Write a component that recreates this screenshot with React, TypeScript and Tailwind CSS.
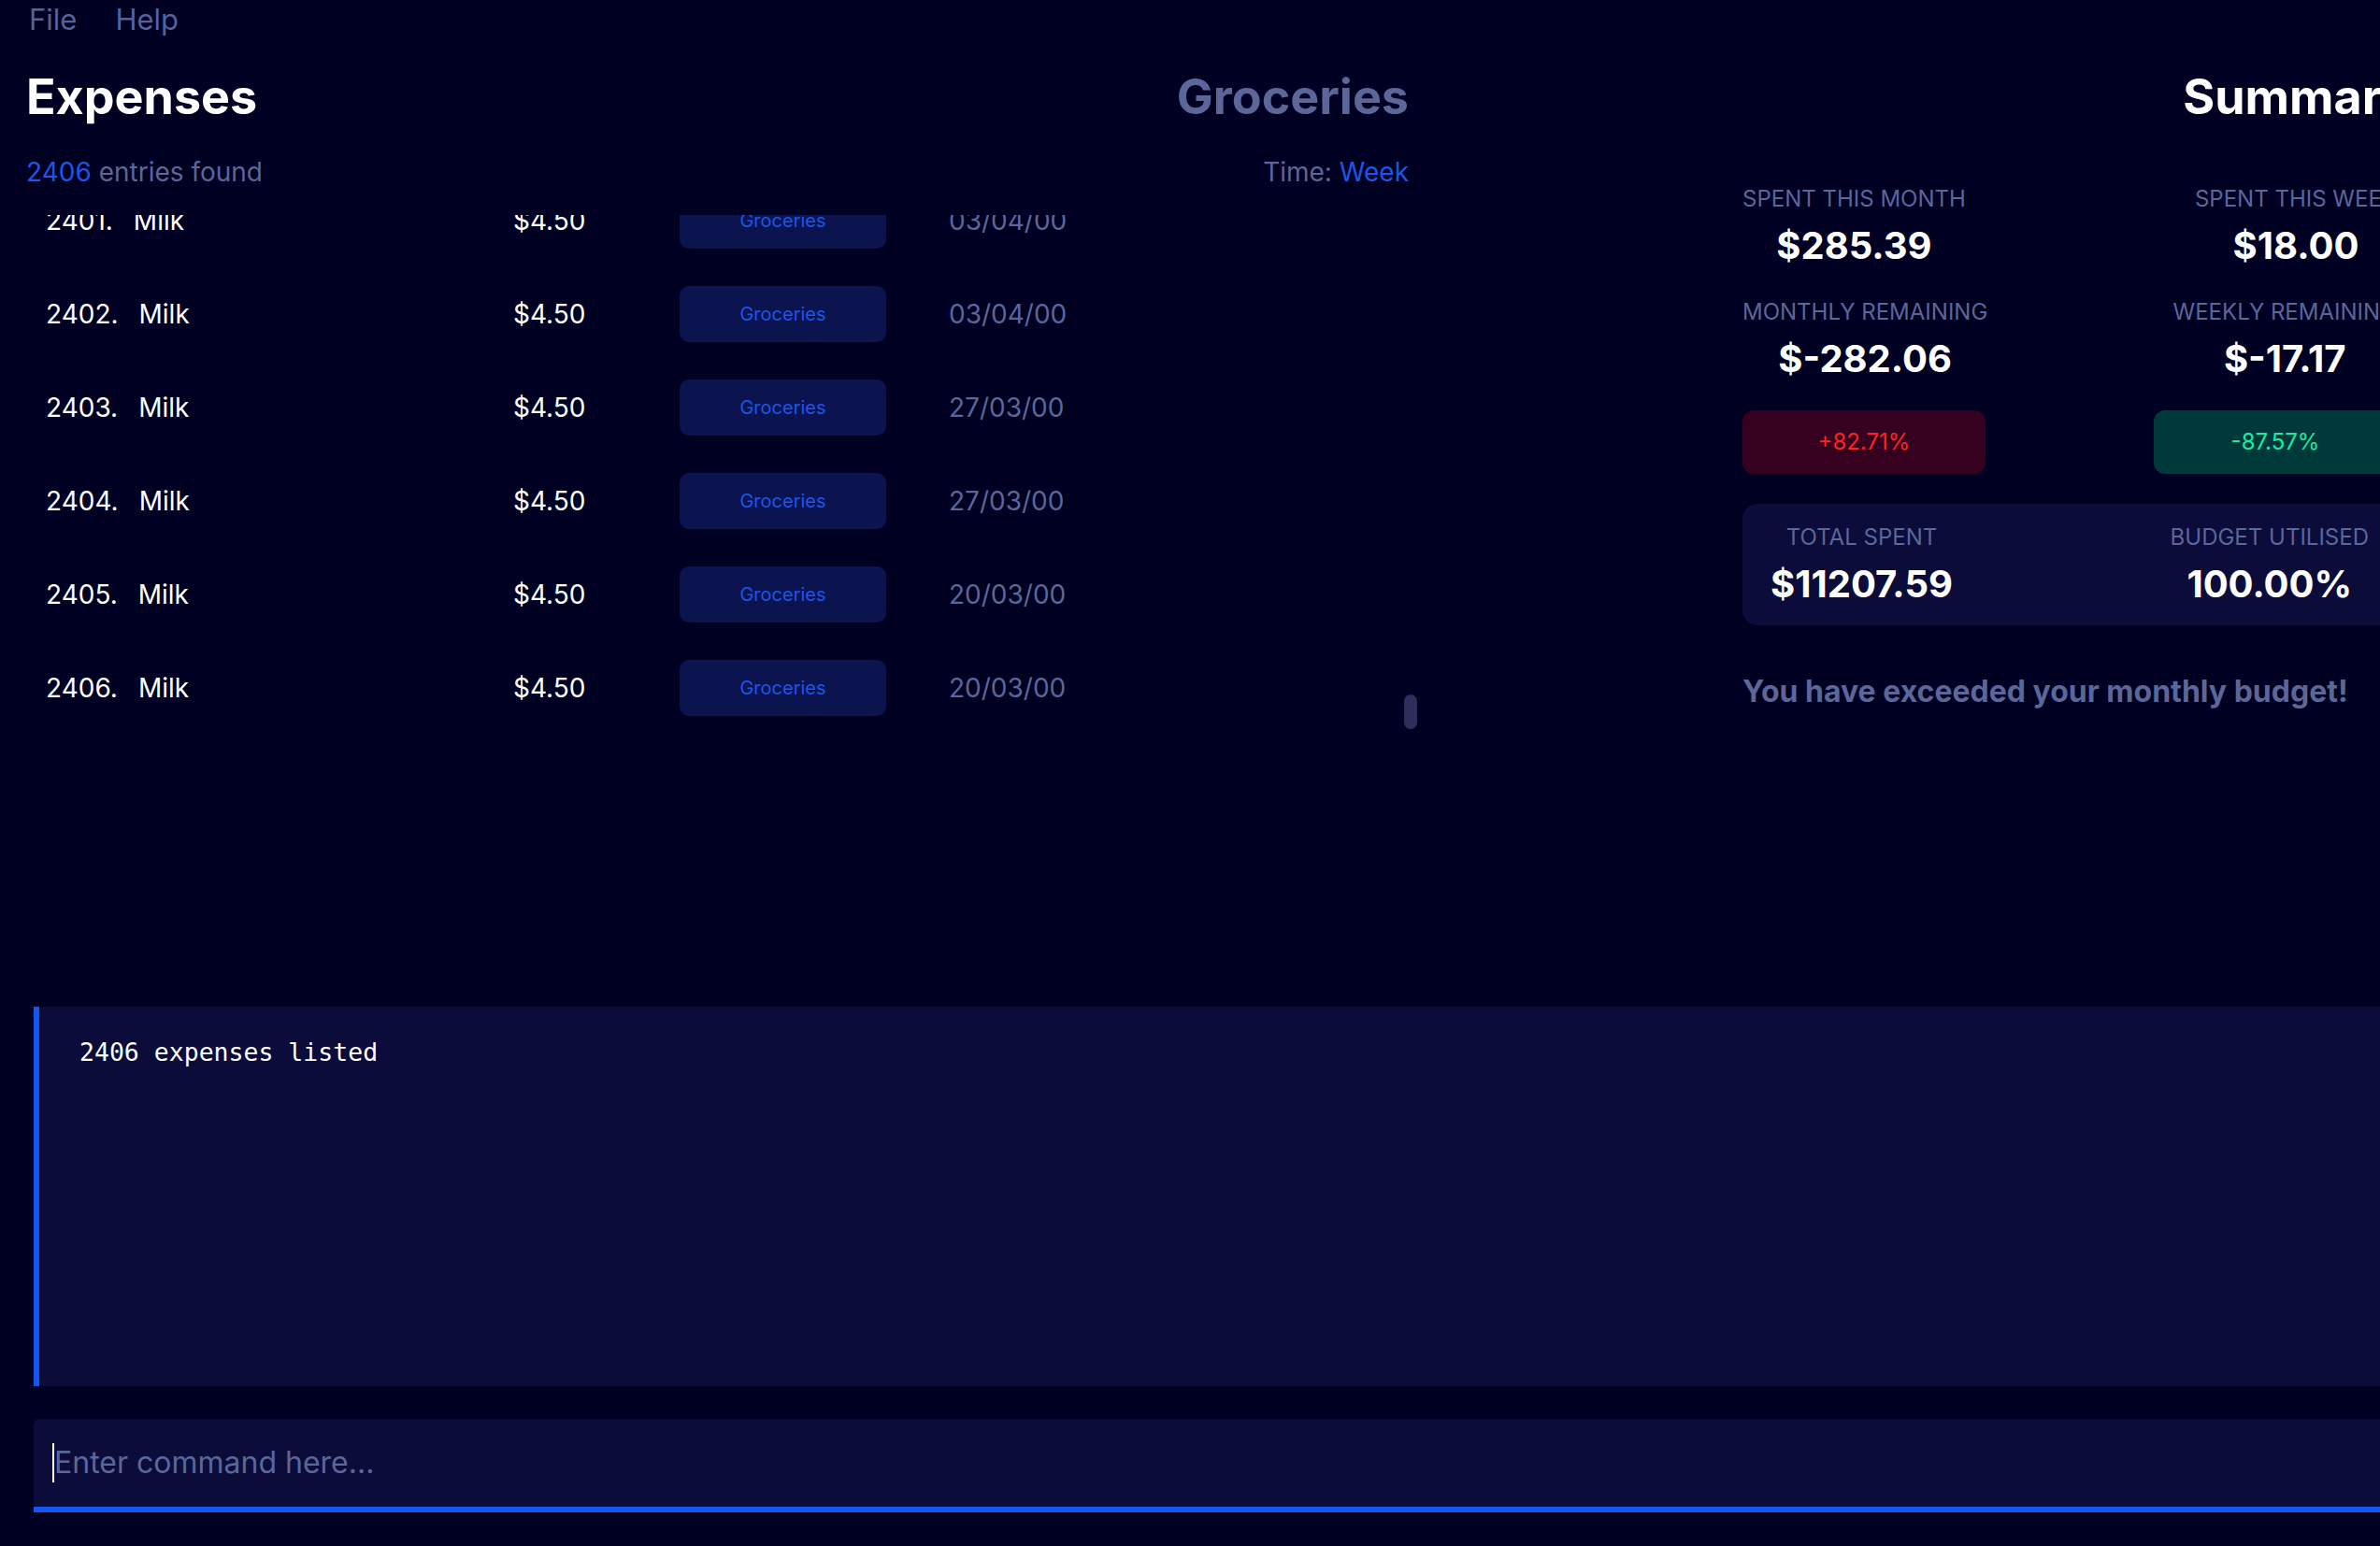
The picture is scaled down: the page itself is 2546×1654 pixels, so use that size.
import React from 'react';

interface Expense {
    index: number;
    name: string;
    amount: string;
    category: string;
    date: string;
}

const expenses: Expense[] = [
    { index: 2401, name: 'Milk', amount: '$4.50', category: 'Groceries', date: '03/04/00' },
    { index: 2402, name: 'Milk', amount: '$4.50', category: 'Groceries', date: '03/04/00' },
    { index: 2403, name: 'Milk', amount: '$4.50', category: 'Groceries', date: '27/03/00' },
    { index: 2404, name: 'Milk', amount: '$4.50', category: 'Groceries', date: '27/03/00' },
    { index: 2405, name: 'Milk', amount: '$4.50', category: 'Groceries', date: '20/03/00' },
    { index: 2406, name: 'Milk', amount: '$4.50', category: 'Groceries', date: '20/03/00' },
];

const ExpenseRow: React.FC<{ expense: Expense }> = ({ expense }) => (
    <div className="h-[100px] flex items-center pl-[21px] text-[28px] leading-[34px]">
        <div className="w-[500px] flex gap-[22px] text-white">
            <span>{expense.index}.</span>
            <span>{expense.name}</span>
        </div>
        <div className="w-[178px] text-white">{expense.amount}</div>
        <div className="w-[221px] h-[60px] rounded-[10px] bg-[#0c1450] flex items-center justify-center text-[20px] text-[#1b55ea]">
            {expense.category}
        </div>
        <div className="ml-[67px] text-[#5b6699]">{expense.date}</div>
    </div>
);

const Stat: React.FC<{ label: string; value: string }> = ({ label, value }) => (
    <div className="flex flex-col items-center">
        <span className="text-[24px] leading-[30px] text-[#5b6699]">{label}</span>
        <span className="mt-[11px] text-[40px] leading-[48px] font-bold text-white">{value}</span>
    </div>
);

export default function App() {
    return (
        <div className="w-screen h-screen overflow-hidden bg-[#000022] font-['Inter',sans-serif]">
            <div className="w-[2600px] h-full flex flex-col">
                {/* menu bar */}
                <div className="h-[40px] flex items-center gap-[41px] pl-[31px] text-[31px] leading-none text-[#56629a]">
                    <span>File</span>
                    <span>Help</span>
                </div>

                <div className="h-[1037px] flex pl-[28px] pt-[34px]">
                    {/* expense list */}
                    <div className="w-[1492px] flex flex-col">
                        <div className="h-[60px] flex items-center justify-between pr-[13px]">
                            <h1 className="text-[52px] leading-[60px] font-bold text-white">Expenses</h1>
                            <h2 className="text-[52px] leading-[60px] font-bold text-[#5b6699]">Groceries</h2>
                        </div>
                        <div className="mt-[33px] h-[34px] flex items-center justify-between pr-[13px] text-[28px] leading-[34px]">
                            <span className="text-[#5b6699]">
                                <span className="text-[#1b55ea]">2406</span> entries found
                            </span>
                            <span className="text-[#5b6699]">
                                Time: <span className="text-[#1b55ea]">Week</span>
                            </span>
                        </div>
                        <div className="relative mt-[29px] h-[556px] overflow-hidden">
                            <div className="-mt-[44px]">
                                {expenses.map(e => <ExpenseRow key={e.index} expense={e} />)}
                            </div>
                            <div className="absolute right-[4px] bottom-[6px] w-[14px] h-[37px] rounded-full bg-[#2e2d5c]"></div>
                        </div>
                    </div>

                    {/* summary */}
                    <div className="ml-[344px] w-[700px] flex flex-col">
                        <div className="h-[60px] flex items-center justify-end -mr-[16px]">
                            <h2 className="text-[52px] leading-[60px] font-bold text-white">Summary</h2>
                        </div>
                        <div className="mt-[64px] flex justify-between">
                            <Stat label="SPENT THIS MONTH" value="$285.39" />
                            <Stat label="SPENT THIS WEEK" value="$18.00" />
                        </div>
                        <div className="mt-[32px] flex justify-between">
                            <Stat label="MONTHLY REMAINING" value="$-282.06" />
                            <Stat label="WEEKLY REMAINING" value="$-17.17" />
                        </div>
                        <div className="mt-[31px] flex justify-between text-[24px]">
                            <div className="w-[260px] h-[68px] rounded-[12px] bg-[#36001f] text-[#ff2222] flex items-center justify-center">+82.71%</div>
                            <div className="w-[260px] h-[68px] rounded-[12px] bg-[#00393a] text-[#1de9a6] flex items-center justify-center">-87.57%</div>
                        </div>
                        <div className="mt-[32px] h-[130px] rounded-[16px] bg-[#0b0c3a] px-[30px] flex items-center justify-between">
                            <Stat label="TOTAL SPENT" value="$11207.59" />
                            <Stat label="BUDGET UTILISED" value="100.00%" />
                        </div>
                        <p className="mt-[52px] text-[32px] leading-[38px] font-bold text-[#5b6699]">
                            You have exceeded your monthly budget!
                        </p>
                    </div>
                </div>

                {/* result display */}
                <div className="mx-[36px] h-[406px] bg-[#0b0c3a] border-l-[6px] border-[#1456f0] pl-[43px] pt-[34px]">
                    <p className="font-['DejaVu_Sans_Mono',monospace] text-[26.5px] leading-[30px] text-white">2406 expenses listed</p>
                </div>

                {/* command box */}
                <div className="mx-[36px] mt-[35px] h-[100px] rounded-t-[6px] bg-[#0b0c3a] border-b-[6px] border-[#1456f0] flex items-center pl-[20px]">
                    <span className="w-[2px] h-[42px] bg-white"></span>
                    <input
                        className="flex-1 bg-transparent outline-none text-[32px] text-white placeholder:text-[#5b6699] caret-transparent"
                        placeholder="Enter command here..."
                    />
                </div>
            </div>
        </div>
    );
}
